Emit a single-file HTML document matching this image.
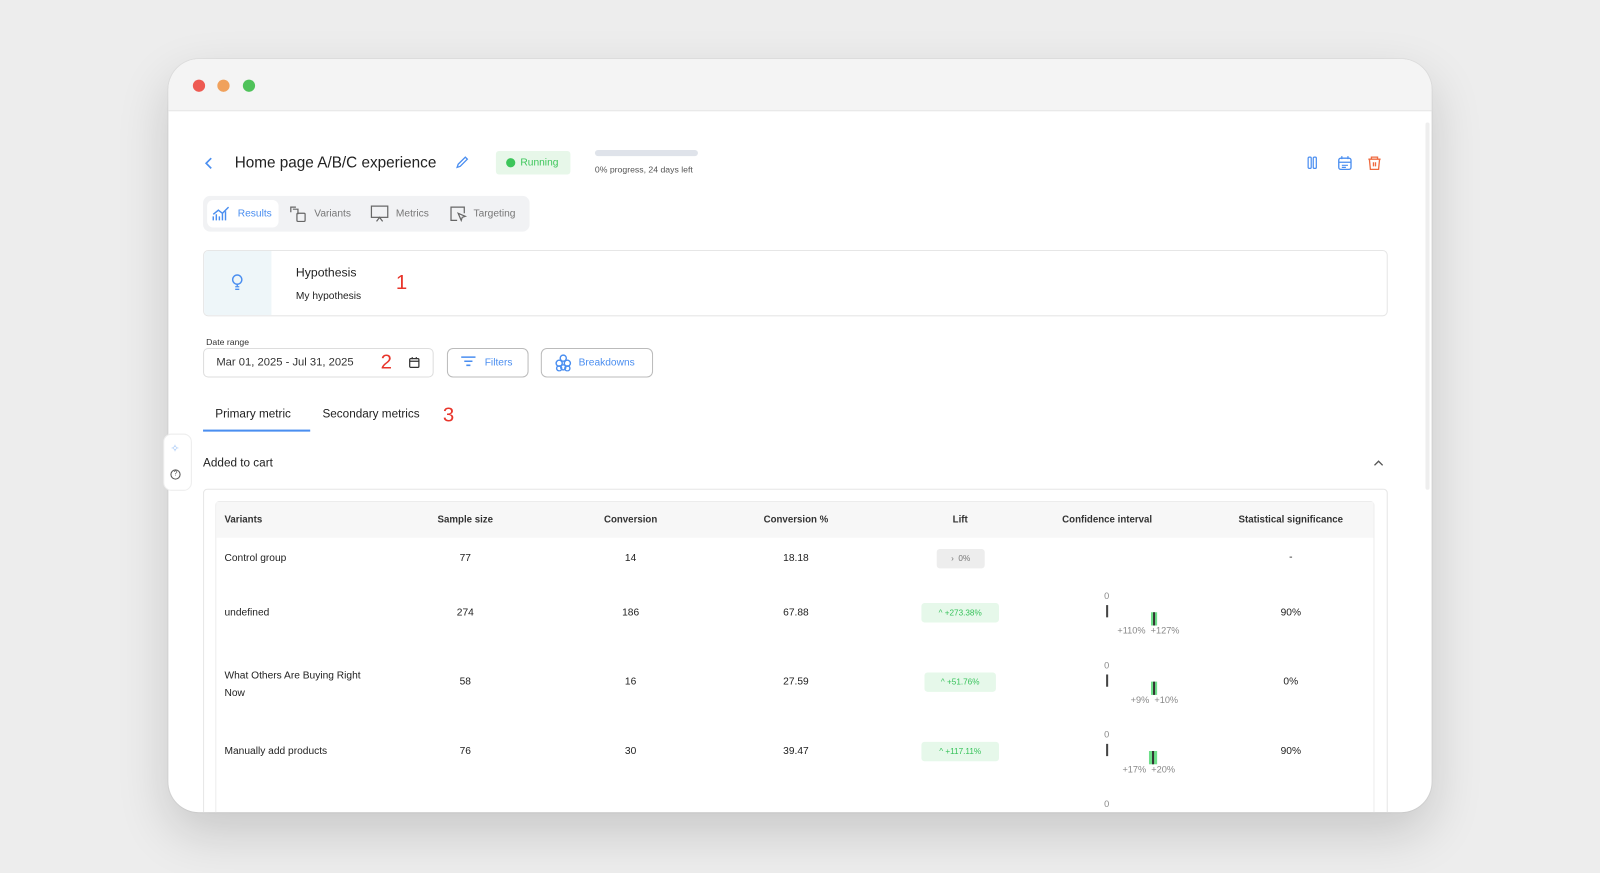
<!DOCTYPE html>
<html><head><meta charset="utf-8"><style>
*{margin:0;padding:0;box-sizing:border-box}
body{width:1600px;height:873px;background:#ededed;font-family:"Liberation Sans",sans-serif;position:relative;overflow:hidden;color:#222}
#root{position:absolute;left:0;top:0;width:1568px;height:856px;transform:scale(1.0204);transform-origin:0 0}
.a{position:absolute}
.win{left:165px;top:58px;width:1238px;height:738px;background:#fff;border-radius:30px;overflow:hidden;box-shadow:0 20px 50px rgba(0,0,0,.16),0 0 0 1px #e2e2e2}
.in{position:absolute;left:-165px;top:-58px;width:1568px;height:856px}
.bar{left:165px;top:58px;width:1238px;height:51px;background:#f4f4f4;border-bottom:1px solid #e6e6e6}
.dot{width:12px;height:12px;border-radius:50%;top:78px}
.t{font-size:11px;white-space:nowrap}
.c{transform:translateX(-50%)}
.pill{height:19px;border-radius:3px;font-size:8px;line-height:19px;text-align:center}
.g{background:#e6f8ea;color:#36c25a}
.ci{font-size:9px;color:#888}
</style></head><body><div id="root">
<div class="a win"><div class="in">
<div class="a bar"></div>
<div class="a dot" style="left:189px;background:#ee5a52"></div>
<div class="a dot" style="left:213px;background:#f0a15c"></div>
<div class="a dot" style="left:238px;background:#4fc25a"></div>
<!-- header -->
<svg class="a" style="left:199px;top:153px" width="12" height="14"><path d="M8 2L3 7l5 5" stroke="#4a8ef0" stroke-width="1.6" fill="none"/></svg>
<div class="a" style="left:230px;top:151px;font-size:15px;color:#222">Home page A/B/C experience</div>
<svg class="a" style="left:446px;top:152px" width="14" height="14"><path d="M2 12l1-3 7-7 2 2-7 7z" stroke="#4a8ef0" stroke-width="1.3" fill="none"/></svg>
<div class="a" style="left:486px;top:148px;width:73px;height:23px;background:#e7f7e9;border-radius:3px"></div>
<div class="a" style="left:496px;top:155px;width:9px;height:9px;border-radius:50%;background:#3cc65a"></div>
<div class="a t" style="left:510px;top:154px;font-size:10px;color:#3cc65a">Running</div>
<div class="a" style="left:583px;top:147px;width:101px;height:6px;background:#dfe3ea;border-radius:3px"></div>
<div class="a t" style="left:583px;top:161px;font-size:8.5px;color:#555">0% progress, 24 days left</div>
<svg class="a" style="left:1280px;top:152px" width="80" height="16">
<rect x="2" y="2" width="3" height="11" rx="1" stroke="#4a8ef0" stroke-width="1.2" fill="none"/><rect x="7" y="2" width="3" height="11" rx="1" stroke="#4a8ef0" stroke-width="1.2" fill="none"/>
<rect x="32" y="3" width="12" height="11" rx="2" stroke="#4a8ef0" stroke-width="1.3" fill="none"/><path d="M32 7h12M35 10h6M35 12h4M35 1v3M41 1v3" stroke="#4a8ef0" stroke-width="1.2"/>
<path d="M61 4h12M64 4V2h6v2M62 4l1 10h8l1-10M66 7v4M68 7v4" stroke="#ef6a3f" stroke-width="1.3" fill="none"/></svg>
<!-- tabs -->
<div class="a" style="left:199px;top:192px;width:320px;height:35px;background:#f1f2f4;border-radius:7px"></div>
<div class="a" style="left:203px;top:196px;width:70px;height:27px;background:#fff;border-radius:6px"></div>
<svg class="a" style="left:208px;top:201px" width="18" height="17"><path d="M1 15V11M4 15V9M7 15V11M10 15V8M13 15V6M1 9l5-4 4 3 6-6" stroke="#4a8ef0" stroke-width="1.4" fill="none"/></svg>
<div class="a t" style="left:233px;top:204px;font-size:10px;color:#4a8ef0">Results</div>
<svg class="a" style="left:283px;top:201px" width="18" height="17"><path d="M2 7V2h5M4 4h5v5" stroke="#666" stroke-width="1.2" fill="none"/><rect x="8" y="8" width="8" height="8" rx="1" stroke="#666" stroke-width="1.2" fill="none"/></svg>
<div class="a t" style="left:308px;top:204px;font-size:10px;color:#777">Variants</div>
<svg class="a" style="left:363px;top:201px" width="18" height="17"><rect x="1" y="1" width="16" height="11" stroke="#666" stroke-width="1.2" fill="none"/><path d="M6 16l3-4 3 4" stroke="#666" stroke-width="1.2" fill="none"/></svg>
<div class="a t" style="left:388px;top:204px;font-size:10px;color:#777">Metrics</div>
<svg class="a" style="left:440px;top:201px" width="18" height="17"><path d="M8 15H2V2h13v6" stroke="#666" stroke-width="1.2" fill="none"/><path d="M9 8l7 3-3 1-1 3z" stroke="#666" stroke-width="1.2" fill="none"/></svg>
<div class="a t" style="left:464px;top:204px;font-size:10px;color:#777">Targeting</div>
<!-- hypothesis -->
<div class="a" style="left:199px;top:245px;width:1161px;height:65px;border:1px solid #e6e6e6;border-radius:5px;overflow:hidden"><div style="width:66px;height:100%;background:#eef6f9"></div></div>
<svg class="a" style="left:226px;top:268px" width="13" height="18"><circle cx="6.5" cy="6" r="4.5" stroke="#4a8ef0" stroke-width="1.4" fill="none"/><path d="M4.5 13h4M4.5 15.5h4M6.5 10v3" stroke="#4a8ef0" stroke-width="1.3"/></svg>
<div class="a t" style="left:290px;top:260px;font-size:12px">Hypothesis</div>
<div class="a t" style="left:290px;top:285px;font-size:10px">My hypothesis</div>
<div class="a t" style="left:388px;top:266px;font-size:20px;color:#e8352b">1</div>
<!-- date -->
<div class="a t" style="left:202px;top:330px;font-size:8.5px;color:#333">Date range</div>
<div class="a" style="left:199px;top:341px;width:226px;height:29px;border:1px solid #ddd;border-radius:5px"></div>
<div class="a t" style="left:212px;top:349px;font-size:11px;color:#333">Mar 01, 2025 - Jul 31, 2025</div>
<div class="a t" style="left:373px;top:344px;font-size:20px;color:#e8352b">2</div>
<svg class="a" style="left:400px;top:349px" width="12" height="12"><rect x="1.5" y="2.5" width="9" height="8.5" rx="1" stroke="#333" stroke-width="1.2" fill="none"/><path d="M1.5 5h9M4 1v2M8 1v2" stroke="#333" stroke-width="1.2"/></svg>
<div class="a" style="left:438px;top:341px;width:80px;height:29px;border:1px solid #bbb;border-radius:6px"></div>
<svg class="a" style="left:451px;top:348px" width="16" height="14"><path d="M1 2h14M4 6h8M6 10h4" stroke="#4a8ef0" stroke-width="1.5"/></svg>
<div class="a t" style="left:475px;top:350px;font-size:10px;color:#4a8ef0">Filters</div>
<div class="a" style="left:530px;top:341px;width:110px;height:29px;border:1px solid #bbb;border-radius:6px"></div>
<svg class="a" style="left:543px;top:346px" width="18" height="18"><g stroke="#4a8ef0" stroke-width="1.4" fill="none"><circle cx="9" cy="5" r="3"/><circle cx="5" cy="10" r="3"/><circle cx="13" cy="10" r="3"/><circle cx="5" cy="15" r="2.5"/><circle cx="13" cy="15" r="2.5"/><circle cx="9" cy="14" r="2.5"/></g></svg>
<div class="a t" style="left:567px;top:350px;font-size:10px;color:#4a8ef0">Breakdowns</div>
<!-- metric tabs -->
<div class="a t" style="left:211px;top:400px;font-size:11.5px">Primary metric</div>
<div class="a" style="left:199px;top:421px;width:105px;height:2px;background:#4a8ef0"></div>
<div class="a t" style="left:316px;top:400px;font-size:11.5px">Secondary metrics</div>
<div class="a t" style="left:434px;top:396px;font-size:20px;color:#e8352b">3</div>
<!-- side widget -->
<div class="a" style="left:160px;top:425px;width:28px;height:56px;background:#fff;border:1px solid #eee;border-radius:8px"></div>
<div class="a t" style="left:167px;top:433px;font-size:11px;color:#9cc2f5">✧</div>
<div class="a" style="left:167px;top:460px;width:10px;height:10px;border:1px solid #555;border-radius:50%;font-size:7px;line-height:8px;text-align:center;color:#555">?</div>
<div class="a t" style="left:199px;top:448px;font-size:11.5px">Added to cart</div>
<svg class="a" style="left:1345px;top:449px" width="12" height="10"><path d="M2 7l4-4 4 4" stroke="#555" stroke-width="1.3" fill="none"/></svg>
<div class="a" style="left:1397px;top:120px;width:4px;height:360px;background:#eee;border-radius:2px"></div>
<!-- table -->
<div class="a" style="left:199px;top:479px;width:1161px;height:330px;border:1px solid #e6e6e6;border-radius:4px"></div>
<div class="a" style="left:211px;top:491px;width:1136px;height:310px;border:1px solid #ececec;border-radius:4px"></div>
<div class="a" style="left:212px;top:492px;width:1134px;height:35px;background:#f7f7f7"></div>
<div class="a t" style="left:220px;top:504px;font-size:9.5px;font-weight:bold;color:#333">Variants</div>
<div class="a t c" style="left:456px;top:504px;font-size:9.5px;font-weight:bold;color:#333">Sample size</div>
<div class="a t c" style="left:618px;top:504px;font-size:9.5px;font-weight:bold;color:#333">Conversion</div>
<div class="a t c" style="left:780px;top:504px;font-size:9.5px;font-weight:bold;color:#333">Conversion %</div>
<div class="a t c" style="left:941px;top:504px;font-size:9.5px;font-weight:bold;color:#333">Lift</div>
<div class="a t c" style="left:1085px;top:504px;font-size:9.5px;font-weight:bold;color:#333">Confidence interval</div>
<div class="a t c" style="left:1265px;top:504px;font-size:9.5px;font-weight:bold;color:#333">Statistical significance</div>
<!-- row1 -->
<div class="a t" style="left:220px;top:542px;font-size:10px">Control group</div>
<div class="a t c" style="left:456px;top:542px;font-size:10px">77</div>
<div class="a t c" style="left:618px;top:542px;font-size:10px">14</div>
<div class="a t c" style="left:780px;top:542px;font-size:10px">18.18</div>
<div class="a pill" style="left:918px;top:538px;width:47px;background:#ededed;color:#777">›&nbsp; 0%</div>
<div class="a t c" style="left:1265px;top:541px;font-size:10px">-</div>
<!-- row2 -->
<div class="a t" style="left:220px;top:595px;font-size:10px">undefined</div>
<div class="a t c" style="left:456px;top:595px;font-size:10px">274</div>
<div class="a t c" style="left:618px;top:595px;font-size:10px">186</div>
<div class="a t c" style="left:780px;top:595px;font-size:10px">67.88</div>
<div class="a pill g" style="left:903px;top:591px;width:76px">^ +273.38%</div>
<div class="a t c" style="left:1265px;top:595px;font-size:10px">90%</div>
<div class="a ci" style="left:1082px;top:579px">0</div><div class="a" style="left:1084px;top:593px;width:1.5px;height:12px;background:#444"></div>
<div class="a" style="left:1128px;top:600px;width:6px;height:13px;background:#6fe08a"></div><div class="a" style="left:1130px;top:600px;width:1.5px;height:13px;background:#333"></div>
<div class="a ci t" style="left:1095px;top:613px">+110% &nbsp;+127%</div>
<!-- row3 -->
<div class="a t" style="left:220px;top:654px;font-size:10px;line-height:17px">What Others Are Buying Right<br>Now</div>
<div class="a t c" style="left:456px;top:663px;font-size:10px">58</div>
<div class="a t c" style="left:618px;top:663px;font-size:10px">16</div>
<div class="a t c" style="left:780px;top:663px;font-size:10px">27.59</div>
<div class="a pill g" style="left:906px;top:659px;width:70px">^ +51.76%</div>
<div class="a t c" style="left:1265px;top:663px;font-size:10px">0%</div>
<div class="a ci" style="left:1082px;top:647px">0</div><div class="a" style="left:1084px;top:661px;width:1.5px;height:12px;background:#444"></div>
<div class="a" style="left:1128px;top:668px;width:6px;height:13px;background:#6fe08a"></div><div class="a" style="left:1130px;top:668px;width:1.5px;height:13px;background:#333"></div>
<div class="a ci t" style="left:1108px;top:681px">+9% &nbsp;+10%</div>
<!-- row4 -->
<div class="a t" style="left:220px;top:731px;font-size:10px">Manually add products</div>
<div class="a t c" style="left:456px;top:731px;font-size:10px">76</div>
<div class="a t c" style="left:618px;top:731px;font-size:10px">30</div>
<div class="a t c" style="left:780px;top:731px;font-size:10px">39.47</div>
<div class="a pill g" style="left:903px;top:727px;width:76px">^ +117.11%</div>
<div class="a t c" style="left:1265px;top:731px;font-size:10px">90%</div>
<div class="a ci" style="left:1082px;top:715px">0</div><div class="a" style="left:1084px;top:729px;width:1.5px;height:12px;background:#444"></div>
<div class="a" style="left:1126px;top:736px;width:8px;height:13px;background:#6fe08a"></div><div class="a" style="left:1129px;top:736px;width:1.5px;height:13px;background:#333"></div>
<div class="a ci t" style="left:1100px;top:749px">+17% &nbsp;+20%</div>
<div class="a ci" style="left:1082px;top:783px">0</div>
</div></div>
<!-- side widget overlaps window edge -->
<div class="a" style="left:160px;top:425px;width:28px;height:56px;background:#fff;border:1px solid #eee;border-radius:8px"></div>
<div class="a t" style="left:167px;top:433px;font-size:11px;color:#9cc2f5">✧</div>
<div class="a" style="left:167px;top:460px;width:10px;height:10px;border:1px solid #555;border-radius:50%;font-size:7px;line-height:8px;text-align:center;color:#555">?</div>
</div></body></html>
